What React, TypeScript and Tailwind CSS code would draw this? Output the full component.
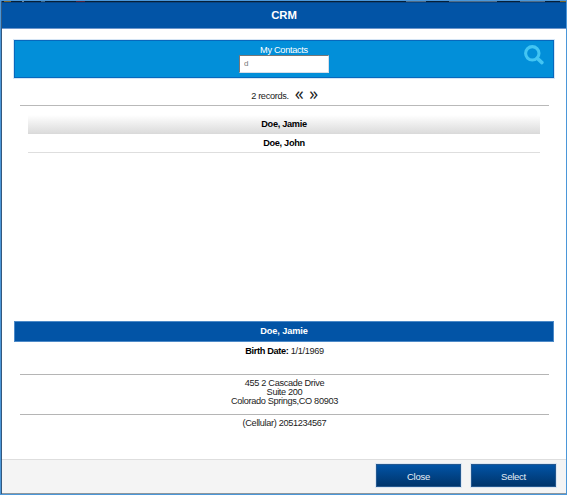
import React from "react";

const contacts = ["Doe, Jamie", "Doe, John"];
const address = ["455 2 Cascade Drive", "Suite 200", "Colorado Springs,CO 80903"];

function SearchIcon() {
  return (
    <svg className="h-5 w-5" viewBox="0 0 20 20" fill="none" stroke="#43c5f3">
      <circle cx="8.3" cy="8.3" r="6.7" strokeWidth="3.1" />
      <path d="M13.4 13.4 17.9 17.6" strokeWidth="3.5" strokeLinecap="round" />
    </svg>
  );
}

/* Sliver of the page behind the dialog that shows above its title bar. */
function BackdropStrip() {
  return (
    <div className="flex h-px shrink-0 bg-[#061f38]">
      <i className="ml-[2px] h-px w-[7px] bg-[#77652f]" />
      <i className="ml-[11px] h-px w-[2px] bg-[#6d8499]" />
      <i className="ml-[17px] h-px w-[4px] bg-[#3d6688]" />
      <i className="ml-[31px] h-px w-[9px] bg-[#542037]" />
      <i className="ml-[321px] h-px w-[20px] bg-[#4f6b87]" />
      <i className="ml-[23px] h-px w-[48px] bg-[#4f6b87]" />
      <i className="ml-[23px] h-px w-[25px] bg-[#4f6b87]" />
      <i className="ml-auto h-px w-[6px] bg-[#77652f]" />
    </div>
  );
}

function ActionButton({ label }: { label: string }) {
  return (
    <button className="h-[23px] w-[85px] border border-[#24588f] bg-linear-to-b from-[#0254a6] to-[#00356c] pt-[2px] text-center text-[9.5px] leading-[20px] tracking-[-0.25px] text-[#e6eef7] shadow-[0_0_0_1px_#dce6f2]">
      {label}
    </button>
  );
}

export default function App() {
  return (
    <div className="flex h-[495px] w-[567px] flex-col border border-[#4b97d9] bg-white font-['Liberation_Sans',Arial,sans-serif] text-[9.2px] leading-[9px] tracking-[-0.34px] text-[#1c1c1c]">
      <div className="flex min-h-0 flex-1 flex-col border-l border-[#34587d]">
        <BackdropStrip />
        <header className="h-[27px] shrink-0 border-t border-b border-t-[#074584] border-b-[#6d96cb] bg-[#0254a6] text-center text-[11.3px] leading-[24px] font-bold tracking-normal text-white">
          CRM
        </header>

        <main className="flex flex-1 flex-col pt-[11px] pr-[12px] pl-[12px]">
          <section className="grid h-[38px] w-[540px] shrink-0 grid-cols-[40px_1fr_40px] border border-[#0768bd] bg-[#028fd9] shadow-[0_0_0_1px_#d5e5f5]">
            <div />
            <div className="flex flex-col items-center pt-[5px] text-white">
              <label className="leading-[9px] tracking-[-0.3px]" htmlFor="q">My Contacts</label>
              <input
                id="q"
                className="h-[18px] w-[90px] border border-[#d8dee8] border-t-[#777] border-l-[#777] bg-white px-[4px] pb-[1px] text-[8px] text-[#777] outline-none"
                defaultValue="d"
              />
            </div>
            <div className="flex justify-end pt-[4px] pr-[9px]">
              <SearchIcon />
            </div>
          </section>

          <div className="ml-[6px] flex h-[28px] w-[529px] shrink-0 justify-center border-b border-[#b9b9b9] pt-[10px]">
            <div className="flex h-[16px] items-center">
              <span className="pt-[1px]">2 records.</span>
              <span className="-mt-[6px] ml-[6px] font-['Open_Sans',sans-serif] text-[18px] leading-[14px]">«</span>
              <span className="-mt-[6px] ml-[6px] font-['Open_Sans',sans-serif] text-[18px] leading-[14px]">»</span>
            </div>
          </div>

          <ul className="mt-[9px] ml-[14px] w-[512px] shrink-0 text-center font-bold tracking-[-0.3px] text-black">
            <li className="h-[19px] border-b border-[#dadada] bg-linear-to-b from-white to-[#dcdcdc] leading-[18px]">
              {contacts[0]}
            </li>
            <li className="h-[19px] border-b border-[#dedede] leading-[19px]">{contacts[1]}</li>
          </ul>

          <section className="mt-auto h-[138px] text-center">
            <h2 className="h-[21px] w-[540px] border border-[#4d8ac8] bg-[#0254a6] text-[9.2px] leading-[19px] font-bold tracking-[-0.08px] text-white">
              Doe, Jamie
            </h2>
            <div className="ml-[6px] w-[529px]">
              <p className="h-[33px] border-b border-[#b5b5b5] pt-[5px]">
                <b className="text-black">Birth Date:</b> 1/1/1969
              </p>
              <address className="h-[40px] border-b border-[#b5b5b5] pt-[4px] not-italic">
                {address.map((line) => (
                  <div key={line}>{line}</div>
                ))}
              </address>
              <p className="pt-[4px]">(Cellular) 2051234567</p>
            </div>
          </section>
        </main>

        <footer className="flex h-[35px] shrink-0 justify-end gap-[10px] border-t border-b border-t-[#dedede] border-b-[#8c969d] bg-[#f4f4f4] pt-[4px] pr-[10px]">
          <ActionButton label="Close" />
          <ActionButton label="Select" />
        </footer>
      </div>
    </div>
  );
}
